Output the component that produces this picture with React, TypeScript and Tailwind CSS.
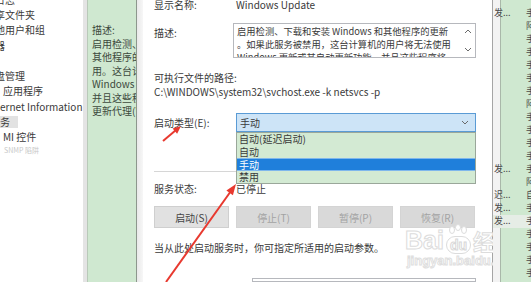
import React from 'react'

const font = { fontFamily: '"Noto Sans CJK SC", "Noto Sans", sans-serif' }

const treeItems = [
  { text: '日志', indent: '-ml-[5px]' },
  { text: '享文件夹', indent: '-ml-[5px]' },
  { text: '地用户和组', indent: '-ml-[5px]' },
  { text: '器', indent: '-ml-[5px]' },
  { text: '', indent: '' },
  { text: '盘管理', indent: '-ml-[5px]' },
  { text: '应用程序', indent: 'ml-[3px]' },
  { text: 'ernet Information S', indent: 'ml-0' },
  { text: '务', indent: '-ml-[5px]', selected: true },
  { text: 'MI 控件', indent: 'ml-[3px]' },
]

const greenLines = ['描述:', '启用检测、', '其他程序的', '用。这台计', 'Windows', '并且这些程', '更新代理(W']

const rightRows = [
  { a: '发...', b: '手' },
  { a: '', b: '阿' },
  { a: '', b: '手' },
  { a: '', b: '手' },
  { a: '', b: '手' },
  { a: '', b: '手' },
  { a: '', b: '手' },
  { a: '', b: '阿' },
  { a: '', b: '手' },
  { a: '', b: '手' },
  { a: '', b: '手' },
  { a: '', b: '手' },
  { a: '发...', b: '手' },
  { a: '', b: '阿' },
  { a: '迟...', b: '自' },
  { a: '发...', b: '手' },
  { a: '发...', b: '手', hl: true },
  { a: '', b: '手' },
  { a: '', b: '手' },
  { a: '', b: '手' },
  { a: '', b: '手' },
]

const options = ['自动(延迟启动)', '自动', '手动', '禁用']

function Chevron({ up }: { up?: boolean }) {
  return (
    <svg width="8" height="5" viewBox="0 0 8 5" className="block">
      <path d={up ? 'M1 4 L4 1 L7 4' : 'M1 1 L4 4 L7 1'} fill="none" stroke="#6b6b6b" strokeWidth="1" />
    </svg>
  )
}

function Button({ label, enabled }: { label: string; enabled?: boolean }) {
  return (
    <div
      className={`w-[75px] h-[22px] flex items-center justify-center text-[10px] border ${
        enabled ? 'bg-[#e1e1e1] border-[#cfcfcf] text-[#444]' : 'bg-[#d9d9d9] border-[#d4d4d4] text-[#a3a3a3]'
      }`}
    >
      {label}
    </div>
  )
}

export default function App() {
  return (
    <div className="relative w-[531px] h-[282px] overflow-hidden flex bg-white text-[#3a3a3a]" style={font}>
      {/* tree */}
      <div className="w-[83px] shrink-0 overflow-hidden bg-white">
        <div className="-mt-[8px] flex flex-col">
          {treeItems.map((it, i) => (
            <div key={i} className="h-[15.3px] flex items-center whitespace-nowrap text-[10px]">
              <span className={`${it.indent} ${it.selected ? 'bg-[#e2e2e2] pl-[5px] pr-[8px]' : ''} leading-[12px]`}>
                {it.text}
              </span>
            </div>
          ))}
          <div className="h-[10px] text-[7px] text-[#c8c8c8] pl-[4px] leading-[10px]">SNMP 陷阱</div>
        </div>
      </div>
      <div className="w-[4px] shrink-0 bg-[#e4e4e4]" />

      {/* green description panel */}
      <div className="w-[49px] shrink-0 bg-[#cfe8d0] overflow-hidden pt-[23px] pl-[4px] border-l border-[#b9c9b9]">
        {greenLines.map((l, i) => (
          <div key={i} className="h-[13.5px] leading-[13.5px] text-[10px] whitespace-nowrap text-[#3d4a3d]">
            {l}
          </div>
        ))}
      </div>
      <div className="w-px shrink-0 bg-[#8d978d]" />
      <div className="w-[6px] shrink-0 bg-gradient-to-r from-[#e9e9e9] to-[#f7f7f7]" />

      {/* dialog */}
      <div className="relative w-[349px] shrink-0 bg-white pl-[11px] pr-[16px] flex flex-col text-[10px]">
        <div className="-mt-[1px] h-[12px] flex items-center leading-[12px]">
          <span className="w-[82px]">显示名称:</span>
          <span>Windows Update</span>
        </div>

        <div className="mt-[12px] flex">
          <span className="w-[79px] pt-[4px] leading-[12px]">描述:</span>
          <div className="w-[243px] h-[35px] border border-[#b6b8bd] flex overflow-hidden">
            <div className="flex-1 pl-[3px] pt-[1px] text-[9.3px] leading-[13px] whitespace-nowrap overflow-hidden">
              <div>启用检测、下载和安装 Windows 和其他程序的更新</div>
              <div>。如果此服务被禁用，这台计算机的用户将无法使用</div>
              <div>Windows 更新或其自动更新功能，并且这些程序将</div>
            </div>
            <div className="w-[14px] flex flex-col items-center justify-between py-[5px]">
              <Chevron up />
              <Chevron />
            </div>
          </div>
        </div>

        <div className="mt-[14px] leading-[12px]">可执行文件的路径:</div>
        <div className="mt-[2px] leading-[12px]">C:\WINDOWS\system32\svchost.exe -k netsvcs -p</div>

        <div className="mt-[15px] flex items-center h-[19px]">
          <span className="w-[82px]">启动类型(E):</span>
          <div className="relative w-[240px] h-[19px]">
            <div className="h-full bg-[#cde4f7] border border-[#5a9bd5] flex items-center justify-between pl-[3px] pr-[6px]">
              <span>手动</span>
              <Chevron />
            </div>
            <div className="absolute left-0 top-full w-full bg-[#d3ead3] border border-[#9aa79a] z-10">
              {options.map((o) => (
                <div
                  key={o}
                  className={`h-[12.5px] leading-[12.5px] pl-[2px] ${
                    o === '手动' ? 'bg-[#1f7fdb] text-white border-y border-[#7fb7ec]' : ''
                  }`}
                >
                  {o}
                </div>
              ))}
            </div>
          </div>
        </div>

        <div className="mt-[39px] h-px bg-[#d6d6d6] w-[322px]" />

        <div className="mt-[12px] h-[12px] flex items-center leading-[12px]">
          <span className="w-[82px]">服务状态:</span>
          <span>已停止</span>
        </div>

        <div className="mt-[11px] flex gap-[7px]">
          <Button label="启动(S)" enabled />
          <Button label="停止(T)" />
          <Button label="暂停(P)" />
          <Button label="恢复(R)" />
        </div>

        <div className="mt-[14px] leading-[12px]">当从此处启动服务时，你可指定所适用的启动参数。</div>

        <div className="mt-[24px] ml-[98px] w-[224px] h-[20px] border border-[#b6b8bd]" />

        {/* watermark */}
        <div className="absolute left-[262px] top-[224px] flex flex-col items-start pointer-events-none select-none">
          <div className="flex items-end">
            <span className="text-[25px] font-bold leading-[28px] text-white [-webkit-text-stroke:1px_#dcdcdc] [font-family:'Liberation_Sans',sans-serif]">
              Bai
            </span>
            <div className="relative mx-[2px] flex flex-col items-center">
              <svg width="24" height="12" viewBox="0 0 24 12" className="block">
                <ellipse cx="6" cy="6" rx="2.5" ry="3.5" fill="white" stroke="#dcdcdc" />
                <ellipse cx="12" cy="3.5" rx="2.5" ry="3" fill="white" stroke="#dcdcdc" />
                <ellipse cx="18" cy="6" rx="2.5" ry="3.5" fill="white" stroke="#dcdcdc" />
              </svg>
              <span className="rounded-full border border-[#dcdcdc] px-[3px] text-[14px] font-bold leading-[16px] text-white [-webkit-text-stroke:1px_#d8d8d8] [font-family:'Liberation_Sans',sans-serif]">
                du
              </span>
            </div>
            <span className="text-[22px] font-bold leading-[28px] text-white [-webkit-text-stroke:1px_#dcdcdc]">
              经验
            </span>
          </div>
          <span className="ml-[2px] text-[13px] font-bold leading-[14px] text-white [-webkit-text-stroke:1px_#dedede] [font-family:'Liberation_Sans',sans-serif]">
            jingyan.baidu.com
          </span>
        </div>
      </div>

      <div className="w-px shrink-0 bg-[#a5a5a5]" />

      {/* services list behind */}
      <div className="relative w-[38px] shrink-0 overflow-hidden bg-[#f3f3f3]">
        <div className="absolute left-[7px] top-0 bottom-0 right-0 bg-[#cfe8d0] border-l border-[#a9b8a9]" />
        <div className="relative pt-[6.5px] flex flex-col text-[9px]">
          {rightRows.map((r, i) => (
            <div key={i} className={`h-[13px] flex items-center whitespace-nowrap ${r.hl ? 'bg-[#e6ede6]' : ''}`}>
              <span className="w-[33px] shrink-0 pl-[1px] text-[#4a4a4a]">{r.a}</span>
              <span className="text-[#4a4a4a]">{r.b}</span>
            </div>
          ))}
        </div>
      </div>

      {/* red arrows */}
      <svg className="absolute inset-0 pointer-events-none" width="531" height="282" viewBox="0 0 531 282">
        <line x1="163" y1="141" x2="176" y2="130" stroke="#e8392f" strokeWidth="2" />
        <polygon points="181,126 177.1,133.8 172.6,128.4" fill="#e8392f" />
        <line x1="166" y1="282" x2="231" y2="191" stroke="#e8392f" strokeWidth="2" />
        <polygon points="236,184 232.9,195.3 226.4,190.6" fill="#e8392f" />
      </svg>
    </div>
  )
}
